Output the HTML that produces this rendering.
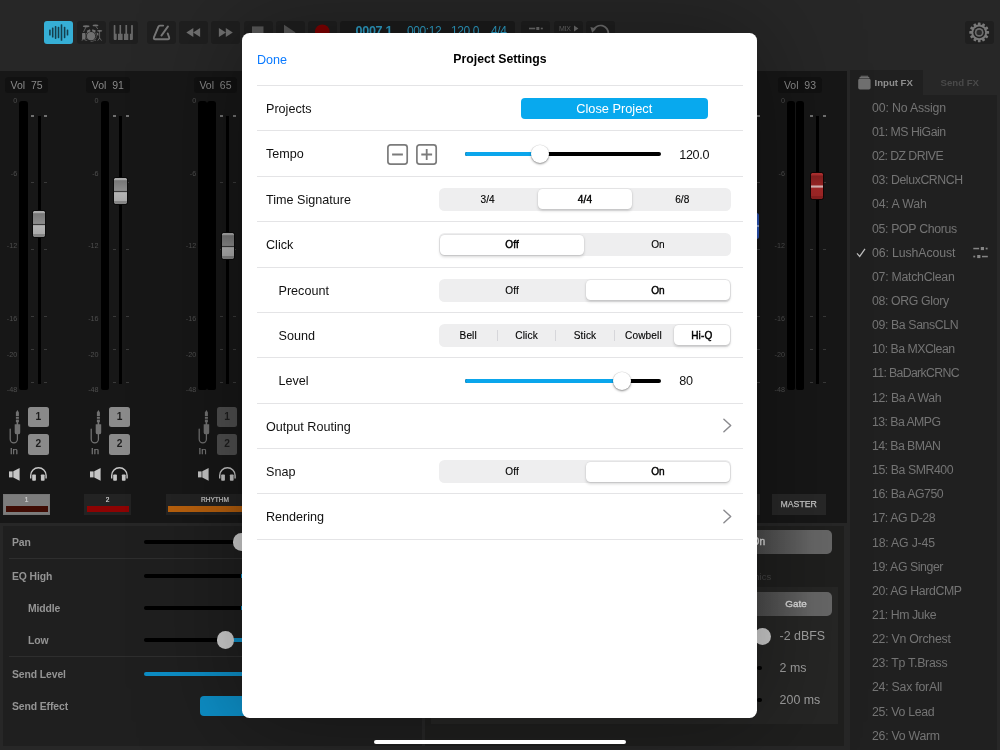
<!DOCTYPE html><html><head><meta charset="utf-8"><title>Project Settings</title><style>
*{box-sizing:border-box;margin:0;padding:0}
html,body{width:1000px;height:750px;overflow:hidden;background:#272727;font-family:"Liberation Sans",sans-serif;}
.a{position:absolute}
#root{position:absolute;left:0;top:0;width:1000px;height:750px;overflow:hidden;background:transparent;will-change:transform}
.tb{position:absolute;top:21px;height:23px;width:29px;border-radius:3px;background:#1f1f1f}
.vol{position:absolute;top:77px;height:16px;width:43.5px;border-radius:3.5px;background:#111;color:#898989;font-size:10.5px;line-height:16px;text-align:center;white-space:pre}
.sc{position:absolute;font-size:7.2px;color:#4e4e4e;text-align:right;width:15.2px;line-height:8px}
.tick{position:absolute;height:1px;width:3px;background:#3a3a3a}
.tick.t0{background:#707070;height:2px;margin-top:-.3px}
.meter{position:absolute;top:100.5px;height:289px;background:#000;border-radius:3px 3px 2px 2px}
.ftrack{position:absolute;top:116px;height:268px;width:2.9px;background:#000}
.knob{position:absolute;width:14.3px;height:28px;border-radius:2.6px;border:1px solid #0a0a0a;background:linear-gradient(#adadad 0,#a8a8a8 8%,#777 10%,#8b8b8b 48%,#3a3a3a 49.5%,#3a3a3a 54%,#b4b4b4 56%,#aaa 87%,#858585 89%,#858585 100%)}
.knob.red{background:linear-gradient(#b23232 0,#ad2e2e 8%,#862020 11%,#9b2525 47%,#d8b4b4 49%,#d8b4b4 55%,#a32727 57%,#9f2626 88%,#8a2020 90%,#8a2020 100%);border-color:#120606}
.nb{position:absolute;width:20.8px;height:20.2px;border-radius:2.5px;background:#8a8a8a;color:#1c1c1c;font-weight:bold;font-size:10.2px;line-height:20.6px;text-align:center}
.nb.dim{background:#4f4f4f;color:#1e1e1e}
.in{position:absolute;font-size:9.6px;color:#7a7a7a;line-height:10px;-webkit-text-stroke:.25px #7a7a7a}
.tl{position:absolute;top:494.2px;height:20.8px;background:#232323;color:#cecece;font-size:6.6px;text-align:center;line-height:11.4px;-webkit-text-stroke:.2px #cecece}
.tl i{position:absolute;left:2.6px;right:2.6px;top:11.7px;height:6.3px;display:block}
.lp{position:absolute;color:#949494;font-size:10.4px;line-height:14px;white-space:nowrap;font-weight:bold;letter-spacing:-.1px}
.fx{position:absolute;left:872px;color:#747474;font-size:12.3px;line-height:15px;white-space:nowrap}
.row{position:absolute;left:257px;width:486px;height:1px;background:#e4e4e6}
.lab{position:absolute;color:#111;font-size:12.6px;line-height:16px;white-space:nowrap}
.seg{position:absolute;left:439px;width:292px;height:23px;border-radius:5.5px;background:#eeeeef}
.seg b{position:absolute;top:1.5px;height:20px;border-radius:4.5px;background:#fff;box-shadow:0 1.5px 3px rgba(0,0,0,.16),0 0 0 .5px rgba(0,0,0,.05)}
.seg span{position:absolute;top:0;height:23px;line-height:23px;font-size:10.1px;color:#000;text-align:center;-webkit-text-stroke:.12px #000;letter-spacing:.12px}
.seg span.s{-webkit-text-stroke:.42px #000}
.seg u{position:absolute;top:6px;height:11px;width:1px;background:#d6d6da}
.sl{position:absolute;height:4.3px;border-radius:2.2px}
.thumb{position:absolute;width:18px;height:18px;border-radius:50%;background:#fff;box-shadow:0 1.2px 2.2px rgba(0,0,0,.38),0 0 0 .5px rgba(0,0,0,.1)}
</style></head><body><div id="root">
<div class="a" style="left:0;top:0;width:1000px;height:70.5px;background:#272727"></div>
<div class="tb" style="left:44px;background:#36afd6"></div>
<div class="tb" style="left:76.75px;background:#1f1f1f"></div>
<div class="tb" style="left:108.75px;background:#1f1f1f"></div>
<div class="tb" style="left:146.75px;background:#1f1f1f"></div>
<div class="tb" style="left:179px;background:#1f1f1f"></div>
<div class="tb" style="left:211.25px;background:#1f1f1f"></div>
<div class="tb" style="left:243.5px;background:#1f1f1f"></div>
<div class="tb" style="left:275.75px;background:#1f1f1f"></div>
<div class="tb" style="left:308px;background:#1f1f1f"></div>
<div class="tb" style="left:339.5px;width:175.6px;background:#1c1c1c"></div>
<div class="tb" style="left:521px"></div>
<div class="tb" style="left:553.5px"></div>
<div class="tb" style="left:586px"></div>
<div class="tb" style="left:965px;top:21px;width:28.5px;height:23px"></div>
<svg class="a" style="left:0;top:0" width="1000" height="70" viewBox="0 0 1000 70"><g fill="#143f4e"><rect x="49.10" y="29.50" width="1.6" height="6" rx="0.6"/><rect x="51.90" y="27.40" width="1.6" height="10.2" rx="0.6"/><rect x="54.80" y="26.10" width="1.6" height="12.8" rx="0.6"/><rect x="57.70" y="26.85" width="1.6" height="11.3" rx="0.6"/><rect x="60.70" y="24.20" width="1.6" height="16.6" rx="0.6"/><rect x="63.80" y="26.85" width="1.6" height="11.3" rx="0.6"/><rect x="66.70" y="29.50" width="1.6" height="6" rx="0.6"/></g><g fill="#707070" stroke="none"><circle cx="91" cy="36.2" r="4.1"/><ellipse cx="86.2" cy="26.2" rx="3.3" ry="0.95"/><ellipse cx="95.5" cy="25.4" rx="3" ry="0.95"/><ellipse cx="99.7" cy="30.8" rx="2.6" ry="0.85"/><rect x="82.1" y="32.9" width="3.2" height="6.6" rx="0.5"/><path d="M86.8 30.7l3.1-1.4l0.7 2l-3.2 1.4z"/><path d="M92.4 29.3l3.3 1.1l-0.5 2.2l-3.2-1.3z"/><path d="M96.5 32.6l1.9 0.6v2.6l-1.2-0.6z"/></g><circle cx="91" cy="36.2" r="5.3" fill="none" stroke="#707070" stroke-width="0.55" stroke-dasharray="10 3.5 14 6" transform="rotate(150 91 36.2)"/><g stroke="#707070" stroke-width="0.8" fill="none"><path d="M86 27l-2.5 5M95.8 26.2l2 2.8M99.6 31v7.6M99.6 38l-1.9 2.6M99.6 38l1.9 2.6M82.5 39.2l-.5 1.5M85 39.2l.4 1.5M87.4 39.8l-1.1 1.1M94.6 39.8l1.1 1.1"/></g><g fill="#686868"><path d="M113.7 25.6q0-.6.6-.6h.5q.6 0 .6.6v8.1h1.3v5.5q0 .8-.8.8h-1.3q-.9 0-.9-.9z"/><path d="M119.5 25h1.6v8.7h1.5v6.3h-4.6v-6.3h1.5z"/><path d="M125.4 25h1.7v8.7h1.2v6.3h-4.3v-6.3h1.4z"/><path d="M132.9 25.6q0-.6-.6-.6h-.6q-.6 0-.6.6v8.1h-1.2v6.3h2.1q.9 0 .9-.9z"/></g><g fill="none" stroke="#777" stroke-width="1.9" stroke-linecap="round" stroke-linejoin="round"><path d="M163.2 25.6h-3.4q-1 0-1.4 1l-4.4 10.6q-.7 2 1.2 2h12.6q1.9 0 1.3-1.9l-1.4-3.9"/><path d="M161.4 35.6l6.6-9.2"/></g><g fill="#707070"><path d="M186.3 32.4l7-4.5v9z"/><path d="M193.1 32.4l7-4.5v9z"/><path d="M232.8 32.4l-7-4.5v9z"/><path d="M225.9 32.4l-7-4.5v9z"/></g><g fill="#595959"><rect x="252" y="26.4" width="11.5" height="11.5"/><path d="M284 24.8l11.6 7.6l-11.6 7.6z"/></g><circle cx="322.3" cy="31.8" r="7.4" fill="#820000"/><g fill="#707070"><rect x="529" y="27.7" width="6.2" height="1.6"/><rect x="536.3" y="27" width="3" height="3"/><rect x="540.8" y="27.7" width="2" height="1.6"/><path d="M574 25.4l4.4 3l-4.4 3z"/></g><path d="M593.2 30.4A7.9 7.9 0 0 1 608.4 33.8" fill="none" stroke="#707070" stroke-width="1.7"/><path d="M590.4 27l5.8 1.6l-4 4.2z" fill="#707070"/><g fill="#787878"><rect x="977.85" y="22.50" width="2.7" height="3.4" rx="0.6" transform="rotate(0 979.2 32.4)"/><rect x="977.85" y="22.50" width="2.7" height="3.4" rx="0.6" transform="rotate(30 979.2 32.4)"/><rect x="977.85" y="22.50" width="2.7" height="3.4" rx="0.6" transform="rotate(60 979.2 32.4)"/><rect x="977.85" y="22.50" width="2.7" height="3.4" rx="0.6" transform="rotate(90 979.2 32.4)"/><rect x="977.85" y="22.50" width="2.7" height="3.4" rx="0.6" transform="rotate(120 979.2 32.4)"/><rect x="977.85" y="22.50" width="2.7" height="3.4" rx="0.6" transform="rotate(150 979.2 32.4)"/><rect x="977.85" y="22.50" width="2.7" height="3.4" rx="0.6" transform="rotate(180 979.2 32.4)"/><rect x="977.85" y="22.50" width="2.7" height="3.4" rx="0.6" transform="rotate(210 979.2 32.4)"/><rect x="977.85" y="22.50" width="2.7" height="3.4" rx="0.6" transform="rotate(240 979.2 32.4)"/><rect x="977.85" y="22.50" width="2.7" height="3.4" rx="0.6" transform="rotate(270 979.2 32.4)"/><rect x="977.85" y="22.50" width="2.7" height="3.4" rx="0.6" transform="rotate(300 979.2 32.4)"/><rect x="977.85" y="22.50" width="2.7" height="3.4" rx="0.6" transform="rotate(330 979.2 32.4)"/><circle cx="979.2" cy="32.4" r="7.9"/></g><circle cx="979.2" cy="32.4" r="5.9" fill="#1e1e1e"/><circle cx="979.2" cy="32.4" r="4.4" fill="#6c6c6c"/><circle cx="979.2" cy="32.4" r="2.7" fill="#2a2a2a"/></svg><div class="a" style="left:355.5px;top:23.6px;color:#2fa3cc;font-size:12.6px;font-weight:bold;line-height:15px;letter-spacing:-.3px;white-space:nowrap">0007.1</div><div class="a" style="left:407px;top:23.6px;color:#2fa3cc;font-size:12px;line-height:15px;letter-spacing:-.4px;white-space:nowrap">000:12</div><div class="a" style="left:451px;top:23.6px;color:#2fa3cc;font-size:12px;line-height:15px;letter-spacing:-.4px;white-space:nowrap">120.0</div><div class="a" style="left:491px;top:23.6px;color:#2fa3cc;font-size:12px;line-height:15px;letter-spacing:-.4px;white-space:nowrap">4/4</div><div class="a" style="left:559px;top:24px;color:#6a6a6a;font-size:7px;line-height:9px;letter-spacing:-.3px">MIX</div>
<div class="a" style="left:0;top:70.6px;width:846.8px;height:452.4px;background:#171717"></div>
<div class="vol" style="left:4.8px">Vol  75</div>
<div class="meter" style="left:19.2px;width:8.8px"></div>
<div class="sc" style="left:2.0px;top:96.8px">0</div>
<div class="sc" style="left:2.0px;top:169.8px">-6</div>
<div class="sc" style="left:2.0px;top:241.8px">-12</div>
<div class="sc" style="left:2.0px;top:314.8px">-16</div>
<div class="sc" style="left:2.0px;top:350.8px">-20</div>
<div class="sc" style="left:2.0px;top:386.3px">-48</div>
<div class="ftrack" style="left:37.699999999999996px"></div>
<div class="tick t0" style="left:31.349999999999998px;top:115.5px"></div>
<div class="tick t0" style="left:44.35px;top:115.5px"></div>
<div class="tick" style="left:31.349999999999998px;top:182.2px"></div>
<div class="tick" style="left:44.35px;top:182.2px"></div>
<div class="tick" style="left:31.349999999999998px;top:248.8px"></div>
<div class="tick" style="left:44.35px;top:248.8px"></div>
<div class="tick" style="left:31.349999999999998px;top:315.5px"></div>
<div class="tick" style="left:44.35px;top:315.5px"></div>
<div class="tick" style="left:31.349999999999998px;top:348.8px"></div>
<div class="tick" style="left:44.35px;top:348.8px"></div>
<div class="tick" style="left:31.349999999999998px;top:382.0px"></div>
<div class="tick" style="left:44.35px;top:382.0px"></div>
<div class="knob" style="left:32.0px;top:210.3px"></div>
<div class="vol" style="left:86.1px">Vol  91</div>
<div class="meter" style="left:100.6px;width:8.8px"></div>
<div class="sc" style="left:83.39999999999999px;top:96.8px">0</div>
<div class="sc" style="left:83.39999999999999px;top:169.8px">-6</div>
<div class="sc" style="left:83.39999999999999px;top:241.8px">-12</div>
<div class="sc" style="left:83.39999999999999px;top:314.8px">-16</div>
<div class="sc" style="left:83.39999999999999px;top:350.8px">-20</div>
<div class="sc" style="left:83.39999999999999px;top:386.3px">-48</div>
<div class="ftrack" style="left:118.95px"></div>
<div class="tick t0" style="left:112.60000000000001px;top:115.5px"></div>
<div class="tick t0" style="left:125.60000000000001px;top:115.5px"></div>
<div class="tick" style="left:112.60000000000001px;top:182.2px"></div>
<div class="tick" style="left:125.60000000000001px;top:182.2px"></div>
<div class="tick" style="left:112.60000000000001px;top:248.8px"></div>
<div class="tick" style="left:125.60000000000001px;top:248.8px"></div>
<div class="tick" style="left:112.60000000000001px;top:315.5px"></div>
<div class="tick" style="left:125.60000000000001px;top:315.5px"></div>
<div class="tick" style="left:112.60000000000001px;top:348.8px"></div>
<div class="tick" style="left:125.60000000000001px;top:348.8px"></div>
<div class="tick" style="left:112.60000000000001px;top:382.0px"></div>
<div class="tick" style="left:125.60000000000001px;top:382.0px"></div>
<div class="knob" style="left:113.25px;top:176.7px"></div>
<div class="vol" style="left:193.75px">Vol  65</div>
<div class="meter" style="left:198.25px;width:8.3px"></div>
<div class="meter" style="left:207.35px;width:8.3px"></div>
<div class="sc" style="left:181.05px;top:96.8px">0</div>
<div class="sc" style="left:181.05px;top:169.8px">-6</div>
<div class="sc" style="left:181.05px;top:241.8px">-12</div>
<div class="sc" style="left:181.05px;top:314.8px">-16</div>
<div class="sc" style="left:181.05px;top:350.8px">-20</div>
<div class="sc" style="left:181.05px;top:386.3px">-48</div>
<div class="ftrack" style="left:226.3px"></div>
<div class="tick t0" style="left:219.95px;top:115.5px"></div>
<div class="tick t0" style="left:232.95px;top:115.5px"></div>
<div class="tick" style="left:219.95px;top:182.2px"></div>
<div class="tick" style="left:232.95px;top:182.2px"></div>
<div class="tick" style="left:219.95px;top:248.8px"></div>
<div class="tick" style="left:232.95px;top:248.8px"></div>
<div class="tick" style="left:219.95px;top:315.5px"></div>
<div class="tick" style="left:232.95px;top:315.5px"></div>
<div class="tick" style="left:219.95px;top:348.8px"></div>
<div class="tick" style="left:232.95px;top:348.8px"></div>
<div class="tick" style="left:219.95px;top:382.0px"></div>
<div class="tick" style="left:232.95px;top:382.0px"></div>
<div class="knob" style="left:220.6px;top:231.5px"></div>
<div class="vol" style="left:778.2px">Vol  93</div>
<div class="meter" style="left:787px;width:8.3px"></div>
<div class="meter" style="left:796.1px;width:8.3px"></div>
<div class="sc" style="left:769.8px;top:96.8px">0</div>
<div class="sc" style="left:769.8px;top:169.8px">-6</div>
<div class="sc" style="left:769.8px;top:241.8px">-12</div>
<div class="sc" style="left:769.8px;top:314.8px">-16</div>
<div class="sc" style="left:769.8px;top:350.8px">-20</div>
<div class="sc" style="left:769.8px;top:386.3px">-48</div>
<div class="ftrack" style="left:815.8499999999999px"></div>
<div class="tick t0" style="left:809.5px;top:115.5px"></div>
<div class="tick t0" style="left:822.5px;top:115.5px"></div>
<div class="tick" style="left:809.5px;top:182.2px"></div>
<div class="tick" style="left:822.5px;top:182.2px"></div>
<div class="tick" style="left:809.5px;top:248.8px"></div>
<div class="tick" style="left:822.5px;top:248.8px"></div>
<div class="tick" style="left:809.5px;top:315.5px"></div>
<div class="tick" style="left:822.5px;top:315.5px"></div>
<div class="tick" style="left:809.5px;top:348.8px"></div>
<div class="tick" style="left:822.5px;top:348.8px"></div>
<div class="tick" style="left:809.5px;top:382.0px"></div>
<div class="tick" style="left:822.5px;top:382.0px"></div>
<div class="knob red" style="left:810.15px;top:172.2px"></div>
<div class="tick t0" style="left:757.2px;top:115.5px"></div>
<div class="tick" style="left:757.2px;top:182.2px"></div>
<div class="tick" style="left:757.2px;top:248.8px"></div>
<div class="tick" style="left:757.2px;top:315.5px"></div>
<div class="tick" style="left:757.2px;top:348.8px"></div>
<div class="tick" style="left:757.2px;top:382.0px"></div>
<div class="nb" style="left:28px;top:406.6px">1</div>
<div class="nb" style="left:28px;top:434.4px">2</div>
<div class="in" style="left:9.9px;top:445.6px">In</div>
<svg class="a" style="left:0px;top:400px" width="60" height="90" viewBox="0 0 60 90"><path d="M17.4 34v5.3a3.6 3.6 0 0 1 -7.2 0v-10.3" fill="none" stroke="#727272" stroke-width="1.25" stroke-linecap="round"/><g fill="#727272"><path d="M17.4 10l1.5 2.6v3.7h-3v-3.7z"/><rect x="15.9" y="17" width="3" height="1.8"/><rect x="15.9" y="19.6" width="3" height="2.6"/><path d="M14.7 24.2h5.5v8.2q0 1.9 -1.9 1.9h-1.7q-1.9 0 -1.9 -1.9z"/><rect x="16.6" y="22" width="1.6" height="3"/></g><g fill="#c6c6c6"><rect x="9" y="71.4" width="3.6" height="6"/><path d="M13.3 71.2l6.3 -3.2v12.7l-6.3 -3.2z"/></g><path d="M30.7 78.6v-3.2a7.7 7.7 0 0 1 15.4 0v3.2" fill="none" stroke="#c6c6c6" stroke-width="1.4"/><g fill="#c6c6c6"><rect x="32.2" y="74.4" width="3.7" height="6.3" rx="0.8"/><rect x="40.9" y="74.4" width="3.7" height="6.3" rx="0.8"/></g></svg>
<div class="nb" style="left:109.2px;top:406.6px">1</div>
<div class="nb" style="left:109.2px;top:434.4px">2</div>
<div class="in" style="left:91.10000000000001px;top:445.6px">In</div>
<svg class="a" style="left:81.2px;top:400px" width="60" height="90" viewBox="0 0 60 90"><path d="M17.4 34v5.3a3.6 3.6 0 0 1 -7.2 0v-10.3" fill="none" stroke="#727272" stroke-width="1.25" stroke-linecap="round"/><g fill="#727272"><path d="M17.4 10l1.5 2.6v3.7h-3v-3.7z"/><rect x="15.9" y="17" width="3" height="1.8"/><rect x="15.9" y="19.6" width="3" height="2.6"/><path d="M14.7 24.2h5.5v8.2q0 1.9 -1.9 1.9h-1.7q-1.9 0 -1.9 -1.9z"/><rect x="16.6" y="22" width="1.6" height="3"/></g><g fill="#c6c6c6"><rect x="9" y="71.4" width="3.6" height="6"/><path d="M13.3 71.2l6.3 -3.2v12.7l-6.3 -3.2z"/></g><path d="M30.7 78.6v-3.2a7.7 7.7 0 0 1 15.4 0v3.2" fill="none" stroke="#c6c6c6" stroke-width="1.4"/><g fill="#c6c6c6"><rect x="32.2" y="74.4" width="3.7" height="6.3" rx="0.8"/><rect x="40.9" y="74.4" width="3.7" height="6.3" rx="0.8"/></g></svg>
<div class="nb dim" style="left:216.6px;top:406.6px">1</div>
<div class="nb dim" style="left:216.6px;top:434.4px">2</div>
<div class="in" style="left:198.5px;top:445.6px">In</div>
<svg class="a" style="left:188.6px;top:400px" width="60" height="90" viewBox="0 0 60 90"><path d="M17.4 34v5.3a3.6 3.6 0 0 1 -7.2 0v-10.3" fill="none" stroke="#727272" stroke-width="1.25" stroke-linecap="round"/><g fill="#727272"><path d="M17.4 10l1.5 2.6v3.7h-3v-3.7z"/><rect x="15.9" y="17" width="3" height="1.8"/><rect x="15.9" y="19.6" width="3" height="2.6"/><path d="M14.7 24.2h5.5v8.2q0 1.9 -1.9 1.9h-1.7q-1.9 0 -1.9 -1.9z"/><rect x="16.6" y="22" width="1.6" height="3"/></g><g fill="#c6c6c6"><rect x="9" y="71.4" width="3.6" height="6"/><path d="M13.3 71.2l6.3 -3.2v12.7l-6.3 -3.2z"/></g><path d="M30.7 78.6v-3.2a7.7 7.7 0 0 1 15.4 0v3.2" fill="none" stroke="#c6c6c6" stroke-width="1.4"/><g fill="#c6c6c6"><rect x="32.2" y="74.4" width="3.7" height="6.3" rx="0.8"/><rect x="40.9" y="74.4" width="3.7" height="6.3" rx="0.8"/></g></svg>
<div class="tl" style="left:3px;width:47.3px;background:#7c7c7c;color:#cfcfcf;border:1px solid #767676;line-height:10.4px">1<i style="background:#3f0c04;left:1.6px;right:1.6px;top:10.7px"></i></div>
<div class="tl" style="left:84px;width:47.3px">2<i style="background:#8d0303"></i></div>
<div class="tl" style="left:166px;width:98px">RHYTHM<i style="background:linear-gradient(90deg,#b8600d,#b8600d 60%,#a4550a);left:1.9px"></i></div>
<div class="tl" style="left:771.7px;width:54px;background:#282828;color:#c9c9c9;font-size:8.7px;line-height:21.8px;letter-spacing:0;-webkit-text-stroke:.25px #c9c9c9">MASTER</div>
<div class="tl" style="left:700px;width:59.8px;background:#282828"></div>
<div class="a" style="left:3.2px;top:525.6px;width:418.8px;height:220.9px;background:#1f1f1f"></div>
<div class="lp" style="left:12px;top:536px">Pan</div>
<div class="lp" style="left:12px;top:570px">EQ High</div>
<div class="lp" style="left:27.9px;top:602px">Middle</div>
<div class="lp" style="left:27.9px;top:634px">Low</div>
<div class="lp" style="left:12px;top:668px">Send Level</div>
<div class="lp" style="left:12px;top:700px">Send Effect</div>
<div class="a" style="left:9px;top:558.2px;width:405px;height:1px;background:#2e2e2e"></div>
<div class="a" style="left:9px;top:656.3px;width:405px;height:1px;background:#2e2e2e"></div>
<div class="sl" style="left:144px;top:540px;width:120px;height:4px;background:#000"></div>
<div class="sl" style="left:144px;top:573.6px;width:120px;height:4px;background:#000"></div>
<div class="sl" style="left:144px;top:605.7px;width:120px;height:4px;background:#000"></div>
<div class="sl" style="left:144px;top:638px;width:120px;height:4px;background:#000"></div>
<div class="sl" style="left:240.6px;top:573.6px;width:20px;height:4px;background:#0d8ec6;border-radius:0"></div>
<div class="sl" style="left:240.6px;top:605.7px;width:20px;height:4px;background:#0d8ec6;border-radius:0"></div>
<div class="sl" style="left:228px;top:638px;width:30px;height:4px;background:#0d8ec6"></div>
<div class="sl" style="left:144px;top:671.6px;width:120px;height:4px;background:#0d8ec6"></div>
<div class="a" style="left:233px;top:533.4px;width:17.2px;height:17.2px;border-radius:50%;background:#cfcfcf"></div>
<div class="a" style="left:217.1px;top:631.4px;width:17.2px;height:17.2px;border-radius:50%;background:#cfcfcf"></div>
<div class="a" style="left:200px;top:695.7px;width:120px;height:20.5px;border-radius:4px;background:#0d8ec6"></div>
<div class="a" style="left:425px;top:525.6px;width:418.9px;height:220.9px;background:#1f1f1e"></div>
<div class="a" style="left:431px;top:587.2px;width:407px;height:136.6px;background:#262625"></div>
<div class="a" style="left:700px;top:530.4px;width:132.1px;height:23.5px;border-radius:5px;background:linear-gradient(90deg,#4a4a4a 40%,#676767 85%);color:#ddd;font-size:10.2px;-webkit-text-stroke:.35px #ddd;line-height:24px;padding-left:51.5px">On</div>
<div class="a" style="left:700px;top:592px;width:132.1px;height:23.5px;border-radius:5px;background:linear-gradient(90deg,#4a4a4a 40%,#676767 85%)"></div>
<div class="a" style="left:785.3px;top:597.2px;color:#dcdcdc;font-size:9.9px;-webkit-text-stroke:.35px #dcdcdc;line-height:14px;letter-spacing:0">Gate</div>
<div class="a" style="left:741px;width:30.3px;text-align:right;top:571.3px;color:#444;font-size:9.6px;line-height:12px">amics</div>
<div class="a" style="left:753.8px;top:627.7px;width:17.2px;height:17.2px;border-radius:50%;background:#cfcfcf"></div>
<div class="a" style="left:757px;top:665.5px;width:5px;height:4px;border-radius:2px;background:#000"></div>
<div class="a" style="left:757px;top:697.8px;width:5px;height:4px;border-radius:2px;background:#000"></div>
<div class="a" style="left:779.6px;top:628.8px;color:#a0a0a0;font-size:12.4px;line-height:15px;white-space:nowrap">-2 dBFS</div>
<div class="a" style="left:779.6px;top:660.7px;color:#a0a0a0;font-size:12.4px;line-height:15px;white-space:nowrap">2 ms</div>
<div class="a" style="left:779.6px;top:693.0px;color:#a0a0a0;font-size:12.4px;line-height:15px;white-space:nowrap">200 ms</div>
<div class="a" style="left:745px;top:212.5px;width:14.4px;height:26px;border-radius:2.5px;background:linear-gradient(#2a4fae 0,#2c56b8 46%,#8fa8e0 48%,#8fa8e0 53%,#2f5cc0 55%,#2a50b0 100%)"></div>

<div class="a" style="left:849.7px;top:70.4px;width:147.3px;height:680px;background:#202020"></div>
<div class="a" style="left:923px;top:70.4px;width:77px;height:24.8px;background:#272727"></div>

<div class="a" style="left:874.5px;top:76.2px;color:#8e8e8e;font-size:9.6px;font-weight:bold;line-height:14px;white-space:nowrap">Input FX</div>
<div class="a" style="left:940.6px;top:76.2px;color:#4a4a4a;font-size:9.6px;font-weight:bold;line-height:14px;white-space:nowrap">Send FX</div>
<svg class="a" style="left:857px;top:75px" width="15" height="16" viewBox="0 0 15 16"><g fill="#707070"><rect x="3.4" y="0.8" width="8" height="0.9" rx=".4"/><rect x="2.4" y="2.1" width="10" height="1" rx=".4"/><rect x="1.2" y="3.6" width="12.4" height="10.9" rx="1.8"/></g></svg>
<div class="fx" style="top:100.80px;letter-spacing:-0.149px">00: No Assign</div>
<div class="fx" style="top:124.95px;letter-spacing:-0.489px">01: MS HiGain</div>
<div class="fx" style="top:149.10px;letter-spacing:-0.564px">02: DZ DRIVE</div>
<div class="fx" style="top:173.25px;letter-spacing:-0.397px">03: DeluxCRNCH</div>
<div class="fx" style="top:197.40px;letter-spacing:-0.089px">04: A Wah</div>
<div class="fx" style="top:221.55px;letter-spacing:-0.318px">05: POP Chorus</div>
<div class="fx" style="top:245.70px;letter-spacing:-0.106px;color:#787878">06: LushAcoust</div>
<div class="fx" style="top:269.85px;letter-spacing:-0.257px">07: MatchClean</div>
<div class="fx" style="top:294.00px;letter-spacing:-0.352px">08: ORG Glory</div>
<div class="fx" style="top:318.15px;letter-spacing:-0.378px">09: Ba SansCLN</div>
<div class="fx" style="top:342.30px;letter-spacing:-0.496px">10: Ba MXClean</div>
<div class="fx" style="top:366.45px;letter-spacing:-0.656px">11: BaDarkCRNC</div>
<div class="fx" style="top:390.60px;letter-spacing:-0.406px">12: Ba A Wah</div>
<div class="fx" style="top:414.75px;letter-spacing:-0.552px">13: Ba AMPG</div>
<div class="fx" style="top:438.90px;letter-spacing:-0.55px">14: Ba BMAN</div>
<div class="fx" style="top:463.05px;letter-spacing:-0.434px">15: Ba SMR400</div>
<div class="fx" style="top:487.20px;letter-spacing:-0.443px">16: Ba AG750</div>
<div class="fx" style="top:511.35px;letter-spacing:-0.407px">17: AG D-28</div>
<div class="fx" style="top:535.50px;letter-spacing:-0.194px">18: AG J-45</div>
<div class="fx" style="top:559.65px;letter-spacing:-0.43px">19: AG Singer</div>
<div class="fx" style="top:583.80px;letter-spacing:-0.385px">20: AG HardCMP</div>
<div class="fx" style="top:607.95px;letter-spacing:-0.453px">21: Hm Juke</div>
<div class="fx" style="top:632.10px;letter-spacing:-0.241px">22: Vn Orchest</div>
<div class="fx" style="top:656.25px;letter-spacing:-0.25px">23: Tp T.Brass</div>
<div class="fx" style="top:680.40px;letter-spacing:-0.226px">24: Sax forAll</div>
<div class="fx" style="top:704.55px;letter-spacing:-0.296px">25: Vo Lead</div>
<div class="fx" style="top:728.70px;letter-spacing:-0.253px">26: Vo Warm</div>
<svg class="a" style="left:850px;top:240px" width="150" height="26" viewBox="0 0 150 26"><path d="M7 13.3L9.7 16.4L15 8.9" fill="none" stroke="#bdbdbd" stroke-width="1.25"/><g fill="#858585"><rect x="123.3" y="7.8" width="5.8" height="1.5"/><rect x="130.8" y="7" width="3.2" height="3.1"/><rect x="135.7" y="7.7" width="1.9" height="1.7"/><rect x="123.3" y="15.7" width="1.9" height="1.7"/><rect x="127.2" y="15" width="3.2" height="3.1"/><rect x="132" y="15.8" width="5.8" height="1.5"/></g></svg>
<div class="a" style="left:242.3px;top:32.5px;width:515.1px;height:685px;border-radius:7.5px;background:#fff;box-shadow:0 0 100px 6px rgba(0,0,0,.34)"></div>
<div class="lab" style="left:257px;top:51.8px;color:#0a7aff;font-size:12.6px">Done</div>
<div class="lab" style="left:400px;width:200px;text-align:center;top:50.8px;font-weight:bold;font-size:12.25px;color:#000">Project Settings</div>
<div class="row" style="top:85.0px"></div>
<div class="row" style="top:130.0px"></div>
<div class="row" style="top:176.0px"></div>
<div class="row" style="top:221.0px"></div>
<div class="row" style="top:267.0px"></div>
<div class="row" style="top:312.0px"></div>
<div class="row" style="top:357.0px"></div>
<div class="row" style="top:403.0px"></div>
<div class="row" style="top:448.0px"></div>
<div class="row" style="top:493.0px"></div>
<div class="row" style="top:539.0px"></div>
<div class="lab" style="left:266px;top:101.0px">Projects</div>
<div class="lab" style="left:266px;top:146.4px">Tempo</div>
<div class="lab" style="left:266px;top:191.8px">Time Signature</div>
<div class="lab" style="left:266px;top:237.1px">Click</div>
<div class="lab" style="left:278.5px;top:282.5px">Precount</div>
<div class="lab" style="left:278.5px;top:327.9px">Sound</div>
<div class="lab" style="left:278.5px;top:373.3px">Level</div>
<div class="lab" style="left:266px;top:418.7px">Output Routing</div>
<div class="lab" style="left:266px;top:464.0px">Snap</div>
<div class="lab" style="left:266px;top:509.4px">Rendering</div>
<div class="a" style="left:520.5px;top:97.8px;width:187.5px;height:21.2px;border-radius:4px;background:#08a9ee;color:#fff;font-size:12.8px;line-height:21.5px;text-align:center">Close Project</div>
<svg class="a" style="left:386px;top:142.5px" width="52" height="23" viewBox="0 0 52 23"><g fill="none" stroke="#7b7b7b" stroke-width="1.7"><rect x="1.9" y="1.8" width="19.3" height="19.3" rx="2.6"/><rect x="30.9" y="1.8" width="19.3" height="19.3" rx="2.6"/><path d="M6.1 11.5h10.8M35.3 11.5h10.8M40.7 6.1v10.8" stroke-width="1.8"/></g></svg>
<div class="sl" style="left:465px;top:151.7px;width:195.5px;background:#000"></div>
<div class="sl" style="left:465px;top:151.7px;width:74.60000000000002px;background:#0ba6ec"></div>
<div class="thumb" style="left:530.6px;top:144.7px"></div>
<div class="lab" style="left:679.3px;top:146.5px;letter-spacing:-.35px">120.0</div>
<div class="sl" style="left:465px;top:378.6px;width:195.5px;background:#000"></div>
<div class="sl" style="left:465px;top:378.6px;width:156.79999999999995px;background:#0ba6ec"></div>
<div class="thumb" style="left:612.8px;top:371.6px"></div>
<div class="lab" style="left:679.3px;top:373.4px;letter-spacing:-.35px">80</div>
<div class="seg" style="top:187.7px"><b style="left:98.5px;width:94.9px"></b><span class="" style="left:0.0px;width:97.3px">3/4</span><span class="s" style="left:97.3px;width:97.3px">4/4</span><span class="" style="left:194.7px;width:97.3px">6/8</span></div>
<div class="seg" style="top:233.1px"><b style="left:1.2px;width:143.6px"></b><span class="s" style="left:0.0px;width:146.0px">Off</span><span class="" style="left:146.0px;width:146.0px">On</span></div>
<div class="seg" style="top:278.8px"><b style="left:147.2px;width:143.6px"></b><span class="" style="left:0.0px;width:146.0px">Off</span><span class="s" style="left:146.0px;width:146.0px">On</span></div>
<div class="seg" style="top:323.9px"><u style="left:57.9px"></u><u style="left:116.3px"></u><u style="left:174.7px"></u><b style="left:234.8px;width:56.0px"></b><span class="" style="left:0.0px;width:58.4px">Bell</span><span class="" style="left:58.4px;width:58.4px">Click</span><span class="" style="left:116.8px;width:58.4px">Stick</span><span class="" style="left:175.2px;width:58.4px">Cowbell</span><span class="s" style="left:233.6px;width:58.4px">Hi-Q</span></div>
<div class="seg" style="top:460.0px"><b style="left:147.2px;width:143.6px"></b><span class="" style="left:0.0px;width:146.0px">Off</span><span class="s" style="left:146.0px;width:146.0px">On</span></div>
<svg class="a" style="left:721px;top:417.4px" width="12" height="17" viewBox="0 0 12 17"><path d="M2.9 2.2L9.7 8.5L2.9 14.8" fill="none" stroke="#8a8a8e" stroke-width="1.45" stroke-linecap="round" stroke-linejoin="round"/></svg>
<svg class="a" style="left:721px;top:508.1px" width="12" height="17" viewBox="0 0 12 17"><path d="M2.9 2.2L9.7 8.5L2.9 14.8" fill="none" stroke="#8a8a8e" stroke-width="1.45" stroke-linecap="round" stroke-linejoin="round"/></svg>
<div class="a" style="left:373.8px;top:740px;width:252.4px;height:3.8px;border-radius:2px;background:#fff"></div>
</div></body></html>
